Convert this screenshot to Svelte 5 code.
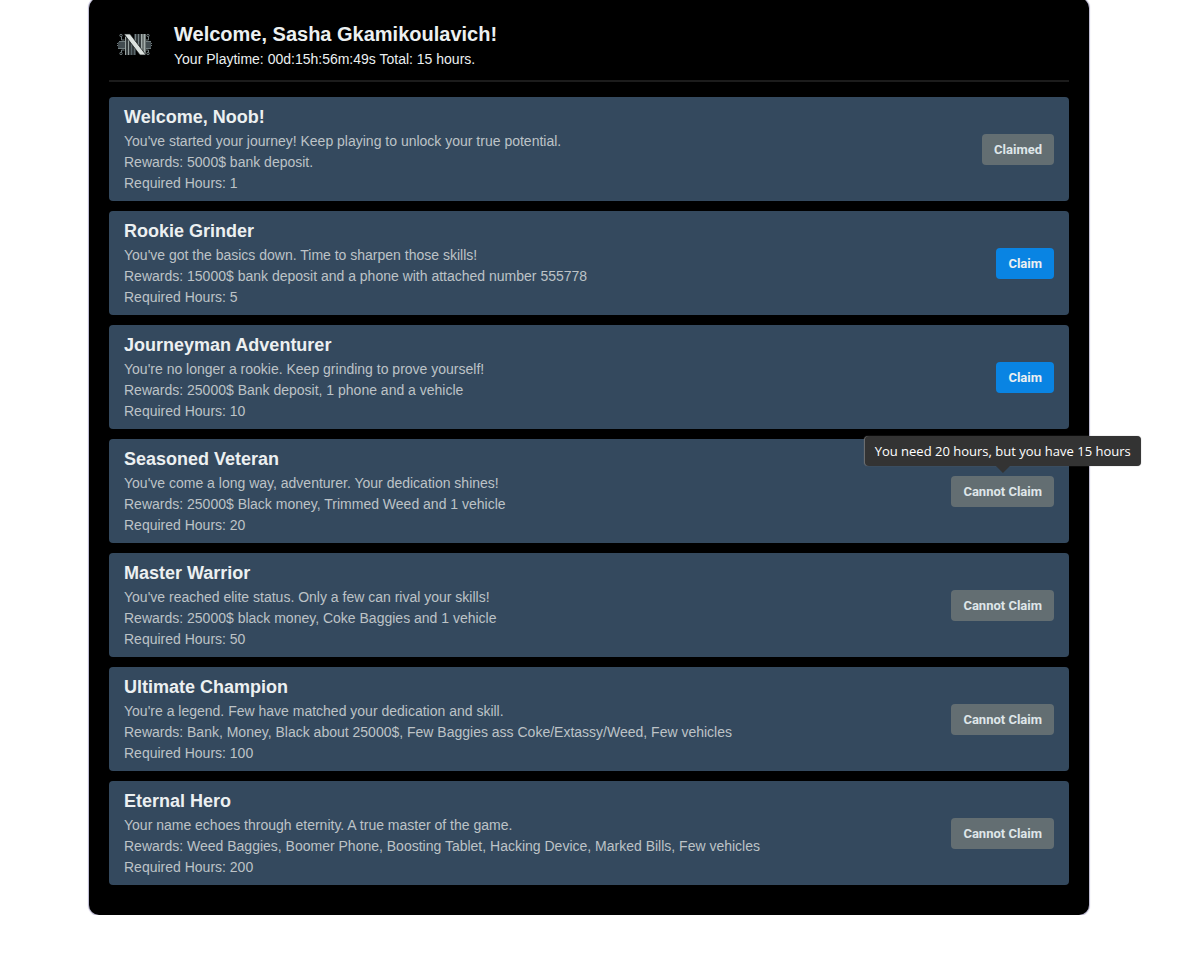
<script>
  const player = { name: 'Sasha Gkamikoulavich', playtime: '00d:15h:56m:49s', hours: 15 };
  const rewards = [
    { title: 'Welcome, Noob!', text: "You've started your journey! Keep playing to unlock your true potential.", reward: '5000$ bank deposit.', hours: 1, claimed: true },
    { title: 'Rookie Grinder', text: "You've got the basics down. Time to sharpen those skills!", reward: '15000$ bank deposit and a phone with attached number 555778', hours: 5 },
    { title: 'Journeyman Adventurer', text: "You're no longer a rookie. Keep grinding to prove yourself!", reward: '25000$ Bank deposit, 1 phone and a vehicle', hours: 10 },
    { title: 'Seasoned Veteran', text: "You've come a long way, adventurer. Your dedication shines!", reward: '25000$ Black money, Trimmed Weed and 1 vehicle', hours: 20 },
    { title: 'Master Warrior', text: "You've reached elite status. Only a few can rival your skills!", reward: '25000$ black money, Coke Baggies and 1 vehicle', hours: 50 },
    { title: 'Ultimate Champion', text: "You're a legend. Few have matched your dedication and skill.", reward: 'Bank, Money, Black about 25000$, Few Baggies ass Coke/Extassy/Weed, Few vehicles', hours: 100 },
    { title: 'Eternal Hero', text: 'Your name echoes through eternity. A true master of the game.', reward: 'Weed Baggies, Boomer Phone, Boosting Tablet, Hacking Device, Marked Bills, Few vehicles', hours: 200 }
  ];
  let hovered = $state(20);

  function label(item) {
    if (item.claimed) return 'Claimed';
    return item.hours <= player.hours ? 'Claim' : 'Cannot Claim';
  }
</script>

<main class="page">
  <section class="panel">
    <header class="header">
      <svg class="logo" viewBox="0 0 50 50" aria-hidden="true">
        <g fill="none" stroke="#707c7e" stroke-width="1">
          <path d="M10 21.500h6M8 23.500h8M8 25.500h8M9 28.500h7M37 21.500h5M37 23.500h6M37 25.500h6M37 28.500h5M12.500 17v3h3M12.500 32v-2h3M39.500 17v3h-3M39.500 32v-2h-3" />
          <circle cx="12" cy="15.500" r="1.200" />
          <circle cx="12" cy="33.500" r="1.200" />
          <circle cx="39" cy="15.500" r="1.200" />
          <circle cx="39" cy="33.500" r="1.200" />
        </g>
        <path d="M9 22h7v6H9zM37 22h5v6h-5z" fill="#424c50" />
        <path d="M16 15h5l6 9v11H16z" fill="#343b3d" />
        <path d="M16.500 17v18M19.500 19v16" stroke="#98a2a0" />
        <path d="M22.500 23v12M25.500 28v7" stroke="#59666a" />
        <path d="M25 14h12v20h-2L25 20z" fill="#333a3c" />
        <path d="M26.500 14v7M29.500 14v11" stroke="#758185" />
        <path d="M32 14h5v20h-2l-3-4z" fill="#6d7574" />
        <path d="M32.500 14v16M35.500 14v20" stroke="#a5afad" />
        <path d="M15 14h6l16 21h-6z" fill="#dce2df" stroke="#101414" stroke-width=".7" />
      </svg>
      <div class="greeting">
        <h1>Welcome, {player.name}!</h1>
        <p>Your Playtime: {player.playtime} Total: {player.hours} hours.</p>
      </div>
    </header>
    <ul class="list">
      {#each rewards as item (item.hours)}
        <li class="card">
          <div class="info">
            <h2>{item.title}</h2>
            <p>{item.text}</p>
            <p>Rewards: {item.reward}</p>
            <p>Required Hours: {item.hours}</p>
          </div>
          <div class="action">
            <button
              type="button"
              class:available={label(item) === 'Claim'}
              aria-describedby={hovered === item.hours ? 'hours-tip' : undefined}
              onmouseenter={() => (hovered = item.hours)}
            >{label(item)}</button>
            {#if hovered === item.hours && item.hours > player.hours}
              <span class="tooltip" role="tooltip" id="hours-tip">You need {item.hours} hours, but you have {player.hours} hours</span>
            {/if}
          </div>
        </li>
      {/each}
    </ul>
  </section>
</main>

<style>
  :global(body) {
    background: #fff;
    overflow-x: hidden;
  }
  .page {
    display: flow-root;
    padding-right: 11px;
    font-family: "Liberation Sans", Arial, sans-serif;
    color: #ecf0f1;
  }
  .panel {
    box-sizing: border-box;
    max-width: 1000px;
    margin: -2px auto 0;
    padding: 22px 20px 30px;
    border-radius: 10px;
    background: #000;
    box-shadow: 0 0 1px 1px #b9b6cf;
  }
  .header {
    display: flex;
    align-items: center;
    gap: 15px;
    padding-bottom: 10px;
    border-bottom: 2px solid #1c1c1c;
    margin-bottom: 15px;
  }
  .logo {
    width: 50px;
    height: 50px;
    flex: none;
  }
  h1, h2, p, ul {
    margin: 0;
    padding: 0;
  }
  .greeting {
    padding-top: 2px;
  }
  h1 {
    font-size: 20px;
    line-height: 24px;
    margin-bottom: 3px;
  }
  p {
    font-size: 14px;
    line-height: 21px;
  }
  .list {
    display: grid;
    gap: 10px;
    list-style: none;
  }
  .card {
    display: flex;
    align-items: center;
    justify-content: space-between;
    gap: 20px;
    padding: 8px 15px 7px;
    border-radius: 4px;
    background: #34495e;
  }
  h2 {
    font-size: 18px;
    line-height: 25px;
    margin-bottom: 1px;
  }
  .info p {
    color: #bdc3c7;
  }
  .action {
    position: relative;
    flex: none;
  }
  button {
    display: block;
    padding: 8px 12px;
    border: 0;
    border-radius: 4px;
    background: #636e72;
    color: #dfe6e9;
    font: bold 13px/15px Roboto, Arial, sans-serif;
  }
  button.available {
    background: #0984e3;
    color: #ecf0f1;
    cursor: pointer;
  }
  .tooltip {
    position: absolute;
    bottom: calc(100% + 10px);
    left: 50%;
    transform: translateX(-50%);
    padding: 5px 10px;
    border-radius: 4px;
    background: #333;
    color: #fff;
    font: 13px/20px "Open Sans", "Noto Sans", sans-serif;
    white-space: nowrap;
    box-shadow: 0 0 1px #777;
  }
  .tooltip::after {
    content: "";
    position: absolute;
    top: 100%;
    left: 50%;
    margin-left: -7px;
    border: 7px solid transparent;
    border-bottom: 0;
    border-top-color: #333;
  }
</style>
